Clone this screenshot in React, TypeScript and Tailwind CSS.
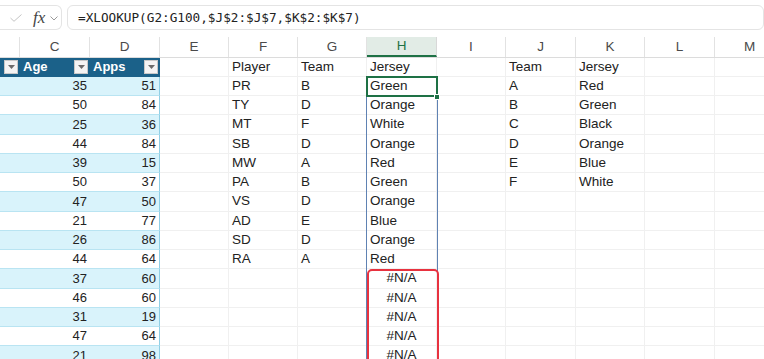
import { Fragment } from "react";

const colWidths = [20, 70, 70, 69, 69, 69, 70, 69, 70, 69, 70, 70];
const colLetters = ["", "C", "D", "E", "F", "G", "H", "I", "J", "K", "L", "M"];

const ages = [35, 50, 25, 44, 39, 50, 47, 21, 26, 44, 37, 46, 31, 47, 21];
const apps = [51, 84, 36, 84, 15, 37, 50, 77, 86, 64, 60, 60, 19, 64, 98];

const players = ["Player", "PR", "TY", "MT", "SB", "MW", "PA", "VS", "AD", "SD", "RA"];
const teams = ["Team", "B", "D", "F", "D", "A", "B", "D", "E", "D", "A"];
const jerseys = [
  "Jersey", "Green", "Orange", "White", "Orange", "Red", "Green", "Orange",
  "Blue", "Orange", "Red", "#N/A", "#N/A", "#N/A", "#N/A", "#N/A",
];
const lookupTeams = ["Team", "A", "B", "C", "D", "E", "F"];
const lookupJerseys = ["Jersey", "Red", "Green", "Black", "Orange", "Blue", "White"];

function Dropdown() {
  return (
    <span className="absolute right-[2px] top-[2px] w-[14px] h-[14px] bg-[#f4f4f4] border border-[#c8c8c8] flex items-center justify-center">
      <svg width="7" height="4" viewBox="0 0 7 4">
        <path d="M0 0 L7 0 L3.5 4 Z" fill="#6b6b6b" />
      </svg>
    </span>
  );
}

function TableCell({ col, row }: { col: number; row: number }) {
  if (row === 0) {
    return (
      <div className="relative bg-[#1b6189] text-white font-bold text-[13px] pl-[3px] flex items-center">
        {col === 1 && "Age"}
        {col === 2 && "Apps"}
        <Dropdown />
      </div>
    );
  }
  const banded = row % 2 === 1;
  return (
    <div
      className={`flex items-center justify-end pr-[3px] text-[13px] text-[#222] border-b border-[#b9e4f2] ${
        banded ? "bg-[#d9f3fb]" : "bg-white"
      } ${col === 2 ? "border-r border-r-[#8fcfe6]" : ""}`}
    >
      {col === 1 && ages[row - 1]}
      {col === 2 && apps[row - 1]}
    </div>
  );
}

function PlainCell({ col, row }: { col: number; row: number }) {
  let text = "";
  if (col === 4) text = players[row] ?? "";
  if (col === 5) text = teams[row] ?? "";
  if (col === 6) text = jerseys[row] ?? "";
  if (col === 8) text = lookupTeams[row] ?? "";
  if (col === 9) text = lookupJerseys[row] ?? "";
  const isError = text === "#N/A";
  return (
    <div
      className={`flex items-center text-[13.5px] text-[#222] border-r border-b border-[#f0f0f0] whitespace-nowrap overflow-hidden ${
        isError ? "justify-center" : "pl-[3px]"
      }`}
    >
      {text}
    </div>
  );
}

export default function App() {
  const rows = Array.from({ length: 16 }, (_, i) => i);

  return (
    <div
      className="w-[764px] h-[359px] overflow-hidden bg-white relative"
      style={{ fontFamily: '"Liberation Sans", Arial, sans-serif' }}
    >
      {/* formula bar */}
      <div className="h-[37px] flex items-start pt-[5px]">
        <div className="w-[62px] h-[25px] border border-l-0 border-[#e4e4e4] rounded-r-md flex items-center">
          <svg width="12" height="8" viewBox="0 0 12 8" className="ml-[10px]">
            <path d="M0.5 4 L4 7.3 L11.5 0.5" fill="none" stroke="#c4c4c4" strokeWidth="1" />
          </svg>
          <span
            className="ml-[11px] italic text-[17px] text-[#444] leading-none"
            style={{ fontFamily: '"Liberation Serif", serif' }}
          >
            fx
          </span>
          <svg width="8" height="5" viewBox="0 0 8 5" className="ml-[5px] mt-[2px]">
            <path d="M0.5 0.5 L4 4 L7.5 0.5" fill="none" stroke="#9a9a9a" strokeWidth="1" />
          </svg>
        </div>
        <div className="ml-[5px] flex-1 h-[25px] border border-[#e4e4e4] rounded-md flex items-center pl-[10px]">
          <span
            className="text-[12.7px] text-[#222]"
            style={{ fontFamily: '"DejaVu Sans Mono", monospace' }}
          >
            =XLOOKUP(G2:G100,$J$2:$J$7,$K$2:$K$7)
          </span>
        </div>
      </div>

      {/* column headers */}
      <div className="flex h-[20.5px] border-b border-[#dcdcdc]">
        {colWidths.map((w, i) => (
          <div
            key={i}
            style={{ width: w }}
            className={`shrink-0 flex items-center justify-center text-[13.5px] border-r ${
              i === 6
                ? "bg-[#e2ece6] text-[#1e7145] border-b-2 border-b-[#1e7145] border-r-[#d8d8d8]"
                : "text-[#4a4a4a] border-[#e2e2e2]"
            }`}
          >
            {colLetters[i]}
          </div>
        ))}
      </div>

      {/* sheet grid */}
      <div className="relative">
        <div className="grid grid-cols-[20px_70px_70px_69px_69px_69px_70px_69px_70px_69px_70px_70px] auto-rows-[19.25px]">
          {rows.map((r) => (
            <Fragment key={r}>
              {colWidths.map((_, c) =>
                c <= 2 ? (
                  <TableCell key={c} col={c} row={r} />
                ) : (
                  <PlainCell key={c} col={c} row={r} />
                )
              )}
            </Fragment>
          ))}
        </div>

        {/* spill range border */}
        <div className="absolute left-[366px] top-[37px] w-[72px] h-[300px] border-x border-[#5f82b3]" />
        {/* active cell */}
        <div className="absolute left-[366px] top-[18.5px] w-[72px] h-[21px] border-2 border-[#1e7145]" />
        <div className="absolute left-[434px] top-[36px] w-[6px] h-[6px] bg-[#1e7145] border border-white" />
        {/* highlight box */}
        <div className="absolute left-[367px] top-[211px] w-[72px] h-[120px] border-2 border-[#e8323f] rounded-[5px]" />
      </div>
    </div>
  );
}
